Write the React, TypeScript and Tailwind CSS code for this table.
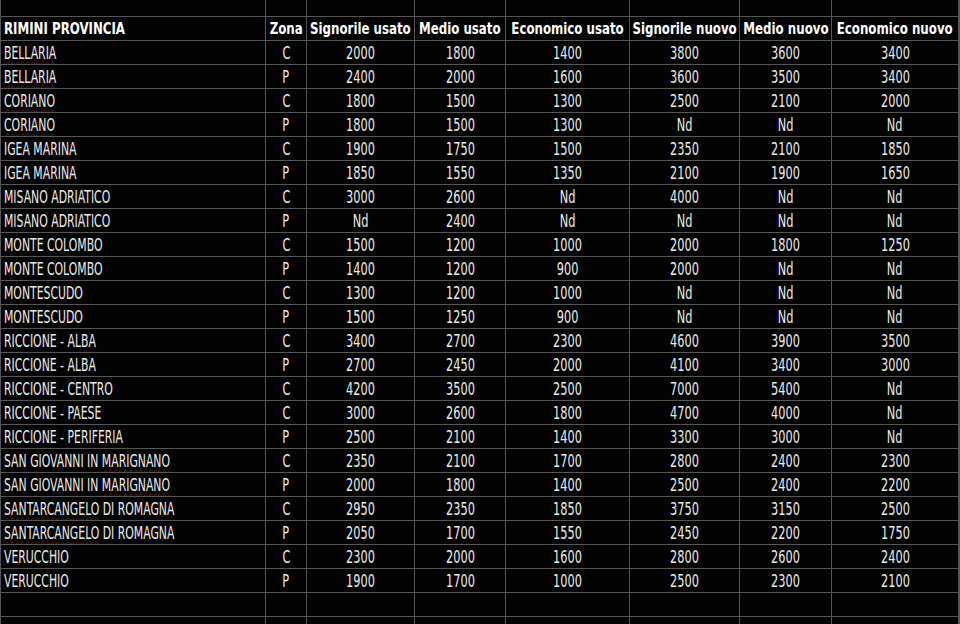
import React from 'react';

type Row = [string, string, string, string, string, string, string, string];

const headers = [
  'RIMINI PROVINCIA',
  'Zona',
  'Signorile usato',
  'Medio usato',
  'Economico usato',
  'Signorile nuovo',
  'Medio nuovo',
  'Economico nuovo',
];

const rows: Row[] = [
  ['BELLARIA', 'C', '2000', '1800', '1400', '3800', '3600', '3400'],
  ['BELLARIA', 'P', '2400', '2000', '1600', '3600', '3500', '3400'],
  ['CORIANO', 'C', '1800', '1500', '1300', '2500', '2100', '2000'],
  ['CORIANO', 'P', '1800', '1500', '1300', 'Nd', 'Nd', 'Nd'],
  ['IGEA MARINA', 'C', '1900', '1750', '1500', '2350', '2100', '1850'],
  ['IGEA MARINA', 'P', '1850', '1550', '1350', '2100', '1900', '1650'],
  ['MISANO ADRIATICO', 'C', '3000', '2600', 'Nd', '4000', 'Nd', 'Nd'],
  ['MISANO ADRIATICO', 'P', 'Nd', '2400', 'Nd', 'Nd', 'Nd', 'Nd'],
  ['MONTE COLOMBO', 'C', '1500', '1200', '1000', '2000', '1800', '1250'],
  ['MONTE COLOMBO', 'P', '1400', '1200', '900', '2000', 'Nd', 'Nd'],
  ['MONTESCUDO', 'C', '1300', '1200', '1000', 'Nd', 'Nd', 'Nd'],
  ['MONTESCUDO', 'P', '1500', '1250', '900', 'Nd', 'Nd', 'Nd'],
  ['RICCIONE - ALBA', 'C', '3400', '2700', '2300', '4600', '3900', '3500'],
  ['RICCIONE - ALBA', 'P', '2700', '2450', '2000', '4100', '3400', '3000'],
  ['RICCIONE - CENTRO', 'C', '4200', '3500', '2500', '7000', '5400', 'Nd'],
  ['RICCIONE - PAESE', 'C', '3000', '2600', '1800', '4700', '4000', 'Nd'],
  ['RICCIONE - PERIFERIA', 'P', '2500', '2100', '1400', '3300', '3000', 'Nd'],
  ['SAN GIOVANNI IN MARIGNANO', 'C', '2350', '2100', '1700', '2800', '2400', '2300'],
  ['SAN GIOVANNI IN MARIGNANO', 'P', '2000', '1800', '1400', '2500', '2400', '2200'],
  ['SANTARCANGELO DI ROMAGNA', 'C', '2950', '2350', '1850', '3750', '3150', '2500'],
  ['SANTARCANGELO DI ROMAGNA', 'P', '2050', '1700', '1550', '2450', '2200', '1750'],
  ['VERUCCHIO', 'C', '2300', '2000', '1600', '2800', '2600', '2400'],
  ['VERUCCHIO', 'P', '1900', '1700', '1000', '2500', '2300', '2100'],
];

// words the spellchecker flags with a red squiggle
const flagged = ['BELLARIA', 'CORIANO', 'MARIGNANO', 'SANTARCANGELO'];

function Name({ text }: { text: string }) {
  const words = text.split(' ');
  return (
    <span className="inline-block origin-left scale-x-[0.71]">
      {words.map((w, i) => (
        <React.Fragment key={i}>
          {i > 0 && ' '}
          {flagged.includes(w) ? (
            <span className="underline decoration-wavy decoration-[#7a1818] decoration-1 underline-offset-2">{w}</span>
          ) : (
            w
          )}
        </React.Fragment>
      ))}
    </span>
  );
}

const cell = 'border-r border-b border-[#565656] flex items-center overflow-hidden whitespace-nowrap';

function BlankRow({ h }: { h: string }) {
  return (
    <>
      {Array.from({ length: 9 }).map((_, i) => (
        <div key={i} className={`${cell} ${h}`} />
      ))}
    </>
  );
}

export default function App() {
  return (
    <div className="w-[960px] h-[624px] overflow-hidden bg-[#030303] font-['DejaVu_Sans_Condensed','DejaVu_Sans',sans-serif]">
      <div className="grid grid-cols-[265px_41px_108px_91px_124px_110px_92px_127px_1fr] border-l border-[#565656]">
        <BlankRow h="h-[17px]" />

        {/* Header */}
        {headers.map((h, i) => (
          <div
            key={h}
            className={`${cell} h-[24px] pt-px text-white font-bold text-[16px] ${
              i === 0 ? 'pl-[3px]' : 'justify-center'
            }`}
          >
            <span className={`inline-block scale-x-[0.82] ${i === 0 ? 'origin-left' : 'origin-center'}`}>{h}</span>
          </div>
        ))}
        <div className={`${cell} h-[24px]`} />

        {/* Data */}
        {rows.map((r, ri) => (
          <React.Fragment key={ri}>
            {r.map((v, ci) => (
              <div
                key={ci}
                className={`${cell} h-[24px] pt-[2px] text-[#ebebeb] text-[17px] ${
                  ci === 0 ? 'pl-[3px]' : 'justify-center'
                }`}
              >
                {ci === 0 ? <Name text={v} /> : <span className="inline-block scale-x-[0.74]">{v}</span>}
              </div>
            ))}
            <div className={`${cell} h-[24px]`} />
          </React.Fragment>
        ))}

        <BlankRow h="h-[24px]" />
        <BlankRow h="h-[24px]" />
      </div>
    </div>
  );
}
